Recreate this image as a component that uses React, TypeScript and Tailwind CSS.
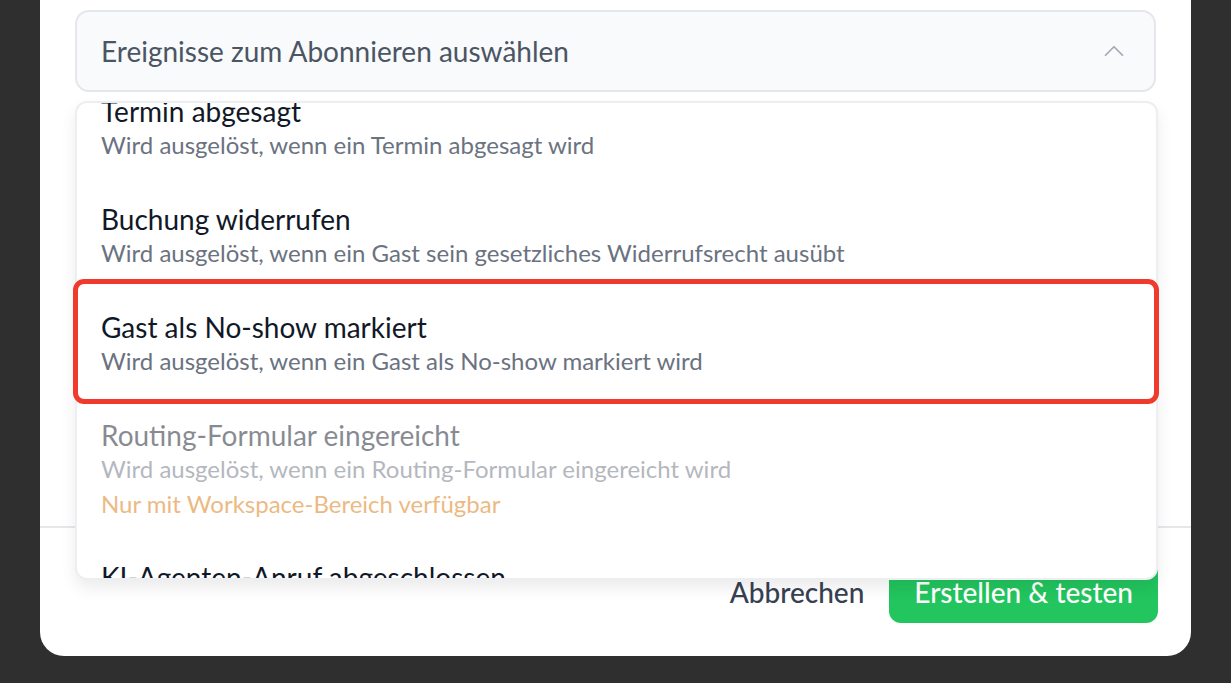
import React from 'react';
import { ChevronUp } from 'lucide-react';

type EventOption = {
    title: string;
    description: string;
    disabled?: boolean;
    note?: string;
};

const events: EventOption[] = [
    { title: 'Termin abgesagt', description: 'Wird ausgelöst, wenn ein Termin abgesagt wird' },
    { title: 'Buchung widerrufen', description: 'Wird ausgelöst, wenn ein Gast sein gesetzliches Widerrufsrecht ausübt' },
    { title: 'Gast als No-show markiert', description: 'Wird ausgelöst, wenn ein Gast als No-show markiert wird' },
    {
        title: 'Routing-Formular eingereicht',
        description: 'Wird ausgelöst, wenn ein Routing-Formular eingereicht wird',
        disabled: true,
        note: 'Nur mit Workspace-Bereich verfügbar',
    },
    { title: 'KI-Agenten-Anruf abgeschlossen', description: 'Wird ausgelöst, wenn ein Anruf eines KI-Agenten abgeschlossen ist' },
];

const EventRow: React.FC<{ event: EventOption }> = ({ event }) => (
    <div className="px-[24px] py-[21px]">
        <div className={event.disabled ? 'opacity-50' : ''}>
            <p className="text-[28px] leading-[33px] text-[#111827]">{event.title}</p>
            <p className="text-[24px] leading-[33px] text-[#6b7280]">{event.description}</p>
            {event.note && <p className="mt-[4px] text-[24px] leading-[30px] text-[#d97706]">{event.note}</p>}
        </div>
    </div>
);

export default function App() {
    return (
        <div className="h-[683px] w-full overflow-hidden bg-[#2f2f2f] px-[40px] font-['Lato','Liberation_Sans',sans-serif]">
            <div className="flex h-[656px] flex-col rounded-b-[24px] bg-white">
                <div className="relative flex-1 px-[35px] pt-[10px]">
                    <div className="flex h-[82px] items-center justify-between rounded-[14px] border-2 border-[#e5e7eb] bg-[#f8fafc] pl-[24px] pr-[23px]">
                        <span className="text-[28px] text-[#4b5563]">Ereignisse zum Abonnieren auswählen</span>
                        <ChevronUp className="h-[34px] w-[34px] text-[#a3a9b3]" strokeWidth={1.2} />
                    </div>

                    {/* open options list */}
                    <div className="absolute left-[35px] right-[33px] top-[101px] z-10 h-[479px] overflow-hidden rounded-[12px] border-2 border-[#eceef1] bg-white shadow-[0_8px_16px_rgba(0,0,0,0.08)]">
                        <div className="-mt-[29px]">
                            {events.map((e) => (
                                <EventRow key={e.title} event={e} />
                            ))}
                        </div>
                    </div>

                    {/* highlight frame around the no-show option */}
                    <div className="pointer-events-none absolute left-[33px] right-[32px] top-[279px] z-20 h-[125px] rounded-[11px] border-[5px] border-[#f03a2e]" />
                </div>

                <div className="flex h-[130px] items-center justify-end gap-[25px] border-t-2 border-[#e5e7eb] pr-[33px]">
                    <button className="text-[28px] font-medium text-[#374151]">Abbrechen</button>
                    <button className="h-[62px] rounded-[12px] bg-[#22c55e] px-[25px] text-[28px] font-medium text-white">
                        Erstellen &amp; testen
                    </button>
                </div>
            </div>
        </div>
    );
}
